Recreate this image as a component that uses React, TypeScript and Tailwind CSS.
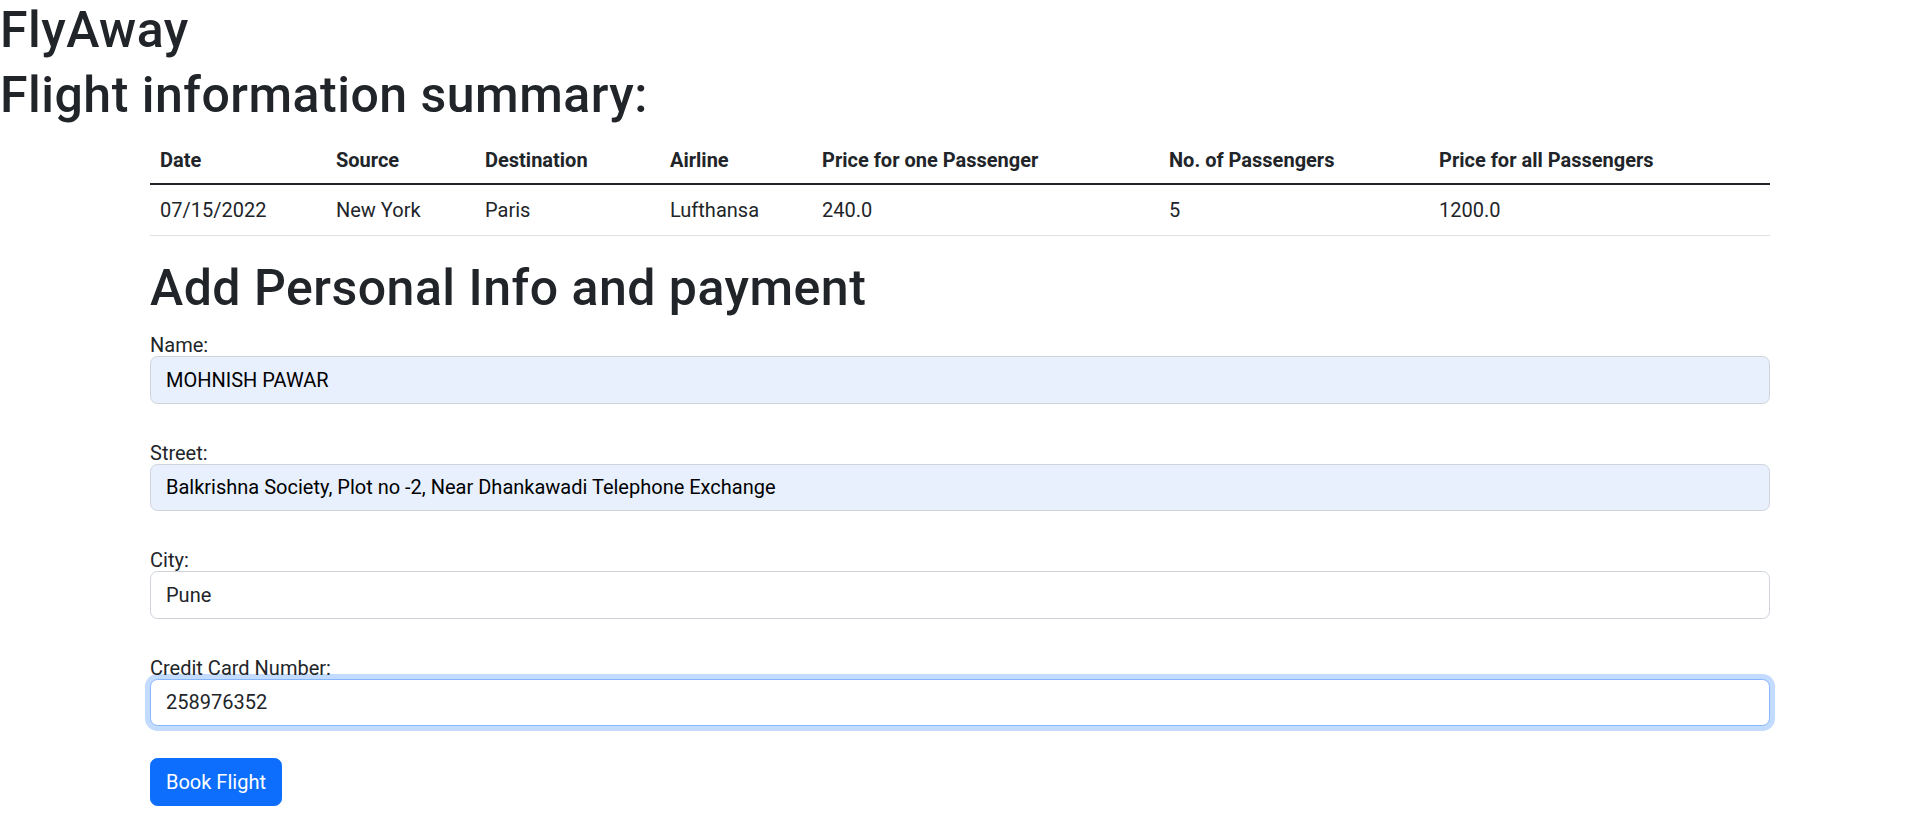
import React from "react";

const columns = [
  { label: "Date", value: "07/15/2022", w: "w-[176px]" },
  { label: "Source", value: "New York", w: "w-[149px]" },
  { label: "Destination", value: "Paris", w: "w-[185px]" },
  { label: "Airline", value: "Lufthansa", w: "w-[152px]" },
  { label: "Price for one Passenger", value: "240.0", w: "w-[347px]" },
  { label: "No. of Passengers", value: "5", w: "w-[270px]" },
  { label: "Price for all Passengers", value: "1200.0", w: "w-[341px]" },
];

const fields = [
  { label: "Name:", value: "MOHNISH PAWAR", autofill: true },
  {
    label: "Street:",
    value: "Balkrishna Society, Plot no -2, Near Dhankawadi Telephone Exchange",
    autofill: true,
  },
  { label: "City:", value: "Pune" },
  { label: "Credit Card Number:", value: "258976352", focused: true },
];

const Field: React.FC<{
  label: string;
  value: string;
  autofill?: boolean;
  focused?: boolean;
}> = ({ label, value, autofill, focused }) => {
  const base =
    "block w-full h-[47.5px] px-[15px] text-[20px] leading-[30px] rounded-[7.5px] border-[1.25px] outline-none";
  const state = focused
    ? "bg-white border-[#86b7fe] shadow-[0_0_0_5px_rgba(13,110,253,0.25)] text-[#212529]"
    : autofill
    ? "bg-[#e8f0fe] border-[#ced4da] text-black"
    : "bg-white border-[#ced4da] text-[#212529]";
  return (
    <div className="mb-[32px]">
      <label className="block h-[28px] leading-[34px] text-[20px]">{label}</label>
      <input className={`${base} ${state}`} defaultValue={value} readOnly />
    </div>
  );
};

export default function App() {
  return (
    <div className="min-h-screen bg-white text-[#212529] font-['Roboto',sans-serif]">
      <h1 className="text-[50px] leading-[60px] font-medium tracking-[0.5px] mb-[5px]">
        FlyAway
      </h1>
      <h1 className="text-[50px] leading-[60px] font-medium tracking-[0.5px] mb-[10px]">
        Flight information summary:
      </h1>

      <div className="ml-[150px] w-[1620px]">
        <table className="w-full table-fixed border-collapse text-[20px] leading-[30px] mb-[22px]">
          <thead>
            <tr>
              {columns.map((c) => (
                <th
                  key={c.label}
                  className={`${c.w} text-left font-bold px-[10px] pt-[10px] pb-[8px] border-b-2 border-[#212529]`}
                >
                  {c.label}
                </th>
              ))}
            </tr>
          </thead>
          <tbody>
            <tr>
              {columns.map((c) => (
                <td
                  key={c.label}
                  className="px-[10px] py-[10px] border-b-[1.25px] border-[#dee2e6]"
                >
                  {c.value}
                </td>
              ))}
            </tr>
          </tbody>
        </table>

        <h1 className="text-[50px] leading-[60px] font-medium tracking-[0.5px] mb-[10px]">
          Add Personal Info and payment
        </h1>

        <form onSubmit={(e) => e.preventDefault()}>
          {fields.map((f) => (
            <Field key={f.label} {...f} />
          ))}
          <button
            type="submit"
            className="h-[47.5px] px-[15px] text-[20px] leading-[30px] text-white bg-[#0d6efd] border-[1.25px] border-[#0d6efd] rounded-[7.5px]"
          >
            Book Flight
          </button>
        </form>
      </div>
    </div>
  );
}
